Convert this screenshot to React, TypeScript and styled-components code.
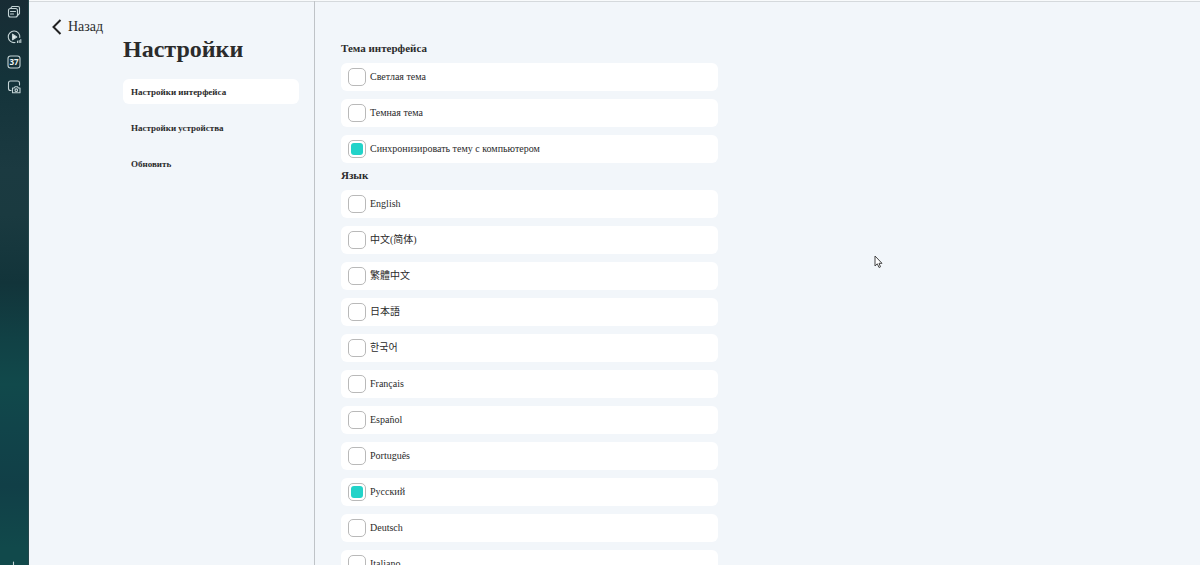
import React, { useState } from "react";
import styled, { createGlobalStyle } from "styled-components";

const GlobalStyle = createGlobalStyle`
  * { box-sizing: border-box; }
  html, body, #root { height: 100%; }
  body {
    margin: 0;
    overflow: hidden;
    background: #f2f6fa;
    color: #2b2b2b;
    font-family: "Liberation Serif", "Noto Sans CJK SC", serif;
  }
  button, input { font: inherit; color: inherit; margin: 0; }
`;

const Shell = styled.div`
  display: flex;
  height: 100%;
`;

const Rail = styled.nav`
  flex: none;
  width: 29px;
  padding-top: 4px;
  display: flex;
  flex-direction: column;
  align-items: center;
  gap: 9px;
  overflow: hidden;
  border-right: 1px solid #24474b;
  background: linear-gradient(180deg, #182c34 0%, #14333a 14%, #1b3a41 30%, #1a3a40 38%, #12343a 50%, #114145 60%, #11494b 68%, #11444a 76%, #113f47 86%, #11494b 97%);
`;

const RailButton = styled.button`
  flex: none;
  width: 28px;
  height: 16px;
  padding: 0;
  border: 0;
  background: none;
  display: flex;
  justify-content: center;
  align-items: center;

  &:last-child {
    height: 4px;
    margin-top: auto;
    align-items: flex-start;
  }
`;

const RailIcon = styled.svg`
  flex: none;
  width: 16px;
  height: 16px;
  overflow: visible;
  fill: none;
  stroke: #c3d3d5;
  stroke-width: 1.1;
  stroke-linecap: round;
  stroke-linejoin: round;
`;

const DayNumber = styled.text`
  font: bold 8px "Open Sans", sans-serif;
  fill: #f0f6f6;
  stroke: none;
`;

const Page = styled.div`
  flex: 1;
  min-width: 0;
  display: flex;
  border-top: 1px solid #f8fafb;
  box-shadow: inset 0 1px #d5d9dc;
`;

const Side = styled.aside`
  flex: none;
  width: 286px;
  padding: 16px 15px 0 23px;
  border-right: 1px solid #bfc3c7;
`;

const BackButton = styled.button`
  display: flex;
  align-items: center;
  gap: 6px;
  height: 20px;
  padding: 0;
  border: 0;
  background: none;
  font-size: 14px;
  line-height: 20px;
`;

const BackIcon = styled.svg`
  width: 10px;
  height: 16px;
  fill: none;
  stroke: #222;
  stroke-width: 2;
`;

const SideContent = styled.div`
  padding-left: 71px;
`;

const Title = styled.h1`
  margin: 0 0 18px;
  font-size: 24px;
  line-height: 24px;
`;

const Menu = styled.div`
  display: flex;
  flex-direction: column;
  gap: 11px;
`;

const MenuButton = styled.button<{ $active: boolean }>`
  height: 25px;
  padding: 0 8px;
  border: 0;
  border-radius: 6px;
  background: ${(p) => (p.$active ? "#fff" : "transparent")};
  font-size: 9px;
  font-weight: bold;
  text-align: left;
`;

const Main = styled.main`
  flex: 1;
  min-width: 0;
  padding: 40px 26px;
  overflow-y: auto;
  scrollbar-width: none;
`;

const Group = styled.fieldset`
  min-width: 0;
  max-width: 377px;
  margin: 0;
  padding: 0;
  border: 0;
`;

const GroupTitle = styled.legend`
  height: 22px;
  padding: 0;
  font-size: 11px;
  font-weight: bold;
  line-height: 14px;
`;

const Options = styled.div`
  display: flex;
  flex-direction: column;
  gap: 8px;
  padding-bottom: 5px;
`;

const OptionRow = styled.label`
  display: flex;
  align-items: center;
  gap: 4px;
  height: 28px;
  padding: 0 7px;
  border-radius: 6px;
  background: #fff;
  font-size: 10px;
`;

const Radio = styled.input`
  appearance: none;
  flex: none;
  width: 18px;
  height: 18px;
  border: 1px solid #b9b9b9;
  border-radius: 5px;
  background: #fff;

  &:checked {
    padding: 2px;
  }
  &:checked::before {
    content: "";
    display: block;
    width: 12px;
    height: 12px;
    border-radius: 3px;
    background: #22d3c9;
  }
`;

const OptionText = styled.span<{ $cjk?: string }>`
  font-family: "Liberation Serif", "Noto Sans CJK ${(p) => p.$cjk ?? "SC"}", serif;
  line-height: 16px;
`;

const Pointer = styled.svg`
  position: absolute;
  left: 874px;
  top: 255px;
  width: 9px;
  height: 14px;
  pointer-events: none;
`;

type Option = { label: string; lang: string; cjk?: string };

const themes: Option[] = [
  { label: "Светлая тема", lang: "ru" },
  { label: "Темная тема", lang: "ru" },
  { label: "Синхронизировать тему с компьютером", lang: "ru" },
];

const languages: Option[] = [
  { label: "English", lang: "en" },
  { label: "中文(简体)", lang: "zh-Hans", cjk: "SC" },
  { label: "繁體中文", lang: "zh-Hant", cjk: "TC" },
  { label: "日本語", lang: "ja", cjk: "JP" },
  { label: "한국어", lang: "ko", cjk: "KR" },
  { label: "Français", lang: "fr" },
  { label: "Español", lang: "es" },
  { label: "Português", lang: "pt" },
  { label: "Русский", lang: "ru" },
  { label: "Deutsch", lang: "de" },
  { label: "Italiano", lang: "it" },
];

const menu = ["Настройки интерфейса", "Настройки устройства", "Обновить"];

function OptionGroup({ title, name, options, initial }: { title: string; name: string; options: Option[]; initial: string }) {
  const [value, setValue] = useState(initial);
  return (
    <Group>
      <GroupTitle>{title}</GroupTitle>
      <Options>
        {options.map((o) => (
          <OptionRow key={o.label}>
            <Radio type="radio" name={name} checked={value === o.label} onChange={() => setValue(o.label)} />
            <OptionText lang={o.lang} $cjk={o.cjk}>{o.label}</OptionText>
          </OptionRow>
        ))}
      </Options>
    </Group>
  );
}

export default function App() {
  const [section, setSection] = useState(menu[0]);
  return (
    <>
      <GlobalStyle />
      <Shell>
        <Rail>
          <RailButton>
            <RailIcon viewBox="0 0 16 16">
              <path d="M4.500 4.500L6 2.500H12Q13.500 2.500 13.500 4V9.500L11.500 11.500" />
              <rect x="2.500" y="4.500" width="9" height="8.500" rx="2" />
              <path d="M4.500 7.500H9.500M4.500 10H7.500" />
            </RailIcon>
          </RailButton>
          <RailButton>
            <RailIcon viewBox="0 0 16 16">
              <path d="M9 13.500A5.800 5.800 0 1 1 13.800 8.500" />
              <path d="M6.500 5.200V10.800L10.800 8Z" fill="#e8f0f0" />
              <path d="M11.500 13.500V12M13.200 13.500V11.500M14.800 13.500V10.500" />
            </RailIcon>
          </RailButton>
          <RailButton>
            <RailIcon viewBox="0 0 16 16">
              <rect x="2" y="2" width="12" height="12" rx="2.500" />
              <DayNumber x="8" y="11" textAnchor="middle">37</DayNumber>
            </RailIcon>
          </RailButton>
          <RailButton>
            <RailIcon viewBox="0 0 16 16">
              <path d="M5 11.500H4.500Q2.500 11.500 2.500 9.500V4Q2.500 2 4.500 2H11.500Q13.500 2 13.500 4V6" />
              <path d="M6.500 9H8.200L9 7.800H11.500L12.300 9H14V13.800H6.500Z" />
              <circle cx="10.300" cy="11.200" r="1.300" />
            </RailIcon>
          </RailButton>
          <RailButton aria-label="Добавить">
            <RailIcon viewBox="0 0 16 16">
              <path d="M7.500 1V13M1.500 7H13.500" />
            </RailIcon>
          </RailButton>
        </Rail>
        <Page>
          <Side>
            <BackButton>
              <BackIcon viewBox="0 0 10 16"><path d="M8.500 1L1.500 8L8.500 15" /></BackIcon>
              Назад
            </BackButton>
            <SideContent>
              <Title>Настройки</Title>
              <Menu>
                {menu.map((m) => (
                  <MenuButton key={m} $active={m === section} onClick={() => setSection(m)}>{m}</MenuButton>
                ))}
              </Menu>
            </SideContent>
          </Side>
          <Main>
            <OptionGroup title="Тема интерфейса" name="theme" options={themes} initial="Синхронизировать тему с компьютером" />
            <OptionGroup title="Язык" name="language" options={languages} initial="Русский" />
          </Main>
        </Page>
      </Shell>
      <Pointer viewBox="0 0 9 14" fill="#fff" stroke="#444" strokeWidth="1">
        <path d="M1 1V11L3.300 8.800L5 12.500L6.500 11.800L5 8.300H8Z" />
      </Pointer>
    </>
  );
}
